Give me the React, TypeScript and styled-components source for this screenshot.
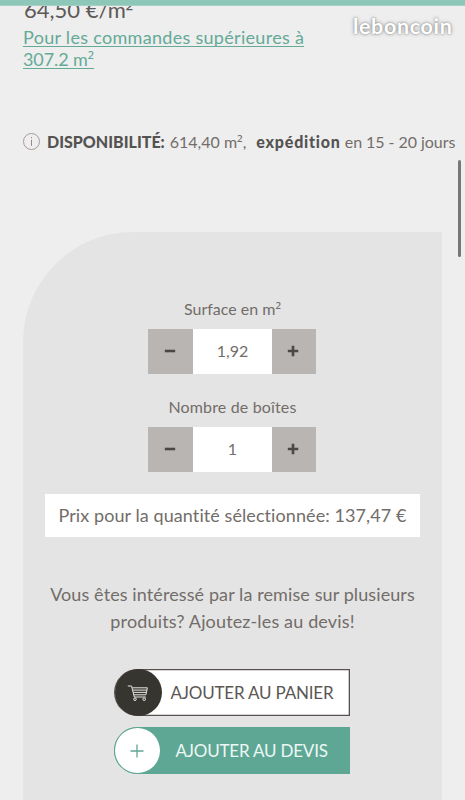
import React from "react";
import styled, { createGlobalStyle } from "styled-components";

const GlobalStyle = createGlobalStyle`
  *, *::before, *::after { box-sizing: border-box; }
  html, body { margin: 0; padding: 0; background: #eeeeee; overflow: hidden; }
  button { border: 0; padding: 0; margin: 0; font: inherit; color: inherit; background: none; cursor: pointer; }
`;

const Page = styled.main`
  position: relative;
  display: flex;
  flex-direction: column;
  width: 465px;
  height: 800px;
  overflow: hidden;
  background: #eeeeee;
  color: #726d69;
  font-family: Lato, "Liberation Sans", sans-serif;
  font-variant-ligatures: none;
  white-space: nowrap;
`;

const Squared = styled.span`
  display: inline-block;
  font-family: "Open Sans", sans-serif;
  line-height: 0;
  vertical-align: -1px;
`;

const TopBar = styled.div`
  flex: none;
  height: 6px;
  background: #8dc7b7;
  border-bottom: 1px solid #a9cfc4;
`;

const PriceClip = styled.div`
  flex: none;
  height: 18px;
  padding-left: 24px;
  overflow: hidden;
`;

const Price = styled.div`
  margin-top: -9px;
  color: #5c5a58;
  font-size: 22px;
  line-height: 25px;
`;

const BulkLink = styled.a`
  flex: none;
  margin: 2px 0 0 23px;
  color: #64aa97;
  font-size: 18px;
  line-height: 22px;
`;

const Line = styled.span<{ $track?: number; $underline?: boolean }>`
  display: block;
  width: max-content;
  height: 1lh;
  letter-spacing: ${(p) => p.$track ?? 0}px;
  background: ${(p) =>
    p.$underline ? "linear-gradient(#64aa97, #64aa97) 0 20px / 100% 1px no-repeat" : "none"};
`;

const Availability = styled.div`
  flex: none;
  display: flex;
  align-items: center;
  height: 20px;
  margin: 62px 0 0 23px;
  font-size: 16px;
  line-height: 20px;
`;

const InfoIcon = styled.svg`
  flex: none;
  width: 17px;
  height: 18px;
  margin-right: 7px;
`;

const Strong = styled.strong<{ $track?: number }>`
  color: #555351;
  font-weight: 900;
  letter-spacing: ${(p) => p.$track ?? 0}px;
`;

const Stock = styled.span`
  margin: 0 10px 0 5px;
`;

const Delay = styled.span`
  margin-left: 4px;
  letter-spacing: -0.05px;
`;

const Panel = styled.section`
  flex: none;
  display: flex;
  flex-direction: column;
  align-items: center;
  width: 419px;
  height: 568px;
  margin: 80px 0 0 23px;
  padding-top: 67px;
  background: #e4e4e4;
  border-top-left-radius: 110px;
`;

const Label = styled.label<{ $track?: number }>`
  height: 20px;
  font-size: 16px;
  line-height: 20px;
  letter-spacing: ${(p) => p.$track ?? 0}px;
`;

const Stepper = styled.div`
  display: grid;
  grid-template-columns: 45px 79px 44px;
  height: 45px;
  margin: 10px 1px 23px 0;
`;

const StepButton = styled.button`
  display: grid;
  place-items: center;
  padding: 0 2px 2px 0;
  background: #b8b5b3;
`;

const StepValue = styled.output`
  display: grid;
  place-items: center;
  padding-bottom: 2px;
  background: #ffffff;
  font-size: 16px;
  line-height: 20px;
`;

const Total = styled.div`
  display: grid;
  place-items: center;
  width: 375px;
  height: 43px;
  margin-top: -1px;
  padding-bottom: 1px;
  background: #ffffff;
  font-size: 18px;
  line-height: 22px;
`;

const Pitch = styled.p`
  display: flex;
  flex-direction: column;
  align-items: center;
  margin: 44px 0 34px;
  font-size: 18px;
  line-height: 27px;
`;

const Actions = styled.div`
  display: flex;
  flex-direction: column;
  gap: 10px;
  margin-right: 2px;
`;

const Action = styled.button<{ $green?: boolean }>`
  display: flex;
  align-items: center;
  gap: ${(p) => (p.$green ? 16 : 9)}px;
  width: 236px;
  height: 47px;
  margin-bottom: 1px;
  padding: 0 1px;
  border-radius: 24px 0 0 24px;
  background: ${(p) => (p.$green ? "#5ea794" : "#ffffff")};
  color: ${(p) => (p.$green ? "#edf8f4" : "#5b5653")};
  box-shadow: inset 0 0 0 1.3px ${(p) => (p.$green ? "#5ea794" : "#57524f")};
  font-size: 17px;
  line-height: 22px;
`;

const Disc = styled.span<{ $green?: boolean }>`
  display: grid;
  place-items: center;
  flex: none;
  width: ${(p) => (p.$green ? 45 : 47)}px;
  height: ${(p) => (p.$green ? 45 : 47)}px;
  border-radius: 50%;
  background: ${(p) => (p.$green ? "#ffffff" : "#373530")};
`;

const ScrollThumb = styled.div`
  position: absolute;
  top: 160px;
  right: 4px;
  width: 3px;
  height: 97px;
  border-radius: 2px;
  background: #777777;
`;

const Watermark = styled.div`
  position: absolute;
  top: 12px;
  left: 353px;
  color: #ffffff;
  font-size: 21.5px;
  line-height: 28px;
  font-weight: 700;
  letter-spacing: 0.65px;
  text-shadow: 0 0 2px rgba(0, 0, 0, 0.4), 0 0 4px rgba(0, 0, 0, 0.3);
`;

const Minus = () => (
  <svg width="12" height="12" viewBox="0 0 12 12">
    <path d="M0.8 6h10.4" stroke="#4a4745" strokeWidth="2.6" />
  </svg>
);

const Plus = () => (
  <svg width="12" height="12" viewBox="0 0 12 12">
    <path d="M0.8 6h10.4M6 0.8v10.4" stroke="#4a4745" strokeWidth="2.6" />
  </svg>
);

const Cart = () => (
  <svg width="22" height="18" viewBox="0 0 22 18" fill="none" stroke="#e6e4e1" strokeWidth="1">
    <path d="M0.8 2h3.7l2.8 11h11.5" />
    <path d="M5.2 3.8h15.2l-1.5 7H6.9M5.7 6.1h14.2M6.3 8.4h13.1" />
    <circle cx="8" cy="15.2" r="1.3" />
    <circle cx="17.2" cy="15.2" r="1.3" />
  </svg>
);

type QuantityProps = { label: React.ReactNode; value: string; track?: number };

const Quantity = ({ label, value, track }: QuantityProps) => (
  <>
    <Label $track={track}>{label}</Label>
    <Stepper>
      <StepButton aria-label="Diminuer"><Minus /></StepButton>
      <StepValue>{value}</StepValue>
      <StepButton aria-label="Augmenter"><Plus /></StepButton>
    </Stepper>
  </>
);

export default function App() {
  return (
    <Page>
      <GlobalStyle />
      <TopBar />
      <PriceClip>
        <Price>64,50 €/m<Squared>²</Squared></Price>
      </PriceClip>
      <BulkLink>
        <Line $underline $track={0.3}>Pour les commandes supérieures à</Line>
        <Line $underline $track={-0.1}>307.2 m<Squared>²</Squared></Line>
      </BulkLink>
      <Availability>
        <InfoIcon viewBox="0 0 17 18" fill="none" stroke="#958782" strokeWidth="0.8">
          <circle cx="8.5" cy="8.5" r="8" />
          <path d="M8.5 6.8v6M8.5 4v1.2" strokeWidth="1" />
        </InfoIcon>
        <Strong>DISPONIBILITÉ:</Strong>
        <Stock>614,40 m<Squared>²</Squared>,</Stock>
        <Strong $track={0.8}>expédition</Strong>
        <Delay>en 15 - 20 jours</Delay>
      </Availability>
      <Panel>
        <Quantity label={<>Surface en m<Squared>²</Squared></>} value="1,92" />
        <Quantity label="Nombre de boîtes" value="1" track={0.15} />
        <Total>
          <Line $track={0.08}>Prix pour la quantité sélectionnée: 137,47 €</Line>
        </Total>
        <Pitch>
          <Line $track={0.1}>Vous êtes intéressé par la remise sur plusieurs</Line>
          <Line $track={0.15}>produits? Ajoutez-les au devis!</Line>
        </Pitch>
        <Actions>
          <Action>
            <Disc><Cart /></Disc>
            <Line $track={-0.2}>AJOUTER AU PANIER</Line>
          </Action>
          <Action $green>
            <Disc $green>
              <svg width="14" height="14" viewBox="0 0 14 14">
                <path d="M0.5 7h13M7 0.5v13" stroke="#5ea794" strokeWidth="1.3" />
              </svg>
            </Disc>
            <Line $track={-0.2}>AJOUTER AU DEVIS</Line>
          </Action>
        </Actions>
      </Panel>
      <ScrollThumb />
      <Watermark>leboncoin</Watermark>
    </Page>
  );
}
